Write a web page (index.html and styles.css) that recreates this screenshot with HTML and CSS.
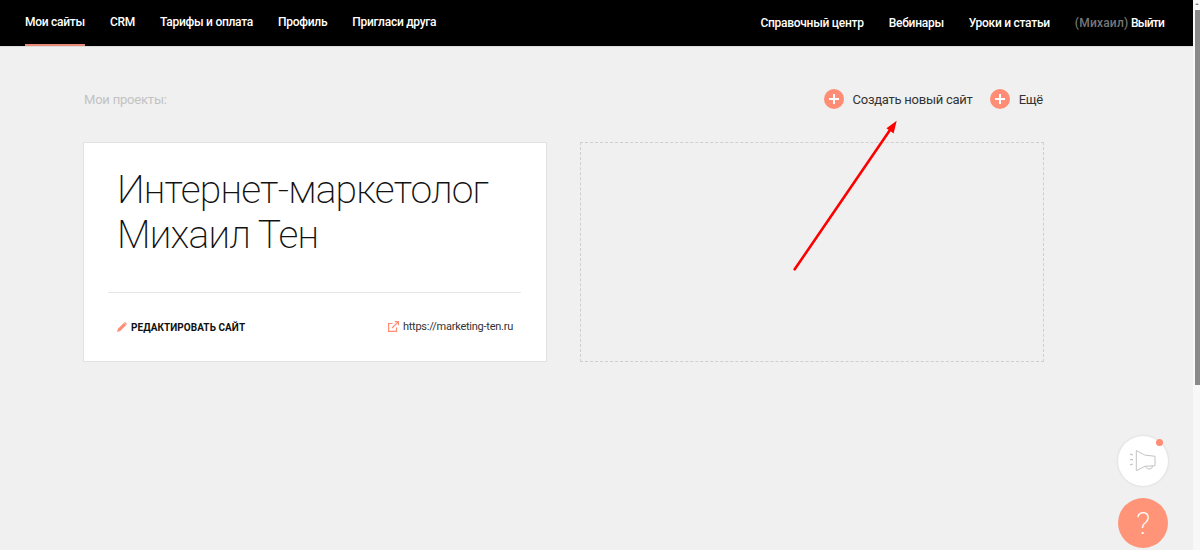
FILE: index.html
```html
<!DOCTYPE html>
<html lang="ru">
<head>
  <meta charset="UTF-8">
  <title>Мои сайты</title>
  <link rel="stylesheet" href="styles.css">
</head>
<body>
  <div class="scrollbar"><div class="scrollbar-arrow"></div><div class="scrollbar-thumb"></div></div>

  <header class="topbar">
    <nav class="nav">
      <a class="nav-item active">Мои сайты</a>
      <a class="nav-item">CRM</a>
      <a class="nav-item">Тарифы и оплата</a>
      <a class="nav-item">Профиль</a>
      <a class="nav-item">Пригласи друга</a>
    </nav>
    <nav class="nav nav-right">
      <a class="nav-item">Справочный центр</a>
      <a class="nav-item">Вебинары</a>
      <a class="nav-item">Уроки и статьи</a>
      <div class="nav-item"><span class="user-name">(Михаил)</span> <a class="logout">Выйти</a></div>
    </nav>
  </header>

  <main class="content">
    <div class="toolbar">
      <div class="toolbar-title">Мои проекты:</div>
      <div class="actions">
        <a class="action"><span class="plus"></span>Создать новый сайт</a>
        <a class="action"><span class="plus"></span>Ещё</a>
      </div>
    </div>

    <div class="projects">
      <div class="card">
        <h1 class="card-title">Интернет-маркетолог<br>Михаил Тен</h1>
        <div class="card-footer">
          <a class="edit-link">
            <svg class="pencil" width="10" height="10" viewBox="0 0 10 10"><path d="M0 10 L1 6.8 L6.8 1 L9 3.2 L3.2 9 Z M7.4 .4 Q8 -.2 8.6 .4 L9.6 1.4 Q10.2 2 9.6 2.6 L9.3 2.9 L7.1 .7 Z" fill="#ff8c75"/></svg>
            Редактировать сайт
          </a>
          <a class="site-link">
            <svg class="external" width="11" height="11" viewBox="0 0 11 11" fill="none" stroke="#ff8c75" stroke-width="1.2"><path d="M8.5 6.5 V10.4 H.6 V2.5 H4.5"/><path d="M4 7 L10.2 .8 M6.8 .6 H10.4 V4.2"/></svg>
            https://marketing-ten.ru
          </a>
        </div>
      </div>
      <div class="placeholder"></div>
    </div>
  </main>

  <svg class="arrow" width="110" height="155" viewBox="0 0 110 155">
    <path d="M1.7 151.3 L97 12" stroke="#fe0000" stroke-width="2.6" stroke-linecap="round" fill="none"/>
    <path d="M103.7 2.7 L100.6 15.5 L93.5 10.2 Z" fill="#fe0000"/>
  </svg>

  <div class="float-btn notice">
    <svg width="26" height="22" viewBox="0 0 26 22" fill="none" stroke="#c4c4c4" stroke-width="1">
      <path d="M6.3 .5 V20.7 L15 16.3 L25 15.7 V6.3 L14.7 5 Z"/>
      <path d="M15 16.3 Q17 19.5 20 19 Q22.5 18.5 22.5 16"/>
      <path d="M0 4 L3 5 M0 9.7 H3 M0 15 L3 14" stroke-width="1.2"/>
    </svg>
    <span class="dot"></span>
  </div>
  <div class="float-btn help">?</div>
</body>
</html>
```

FILE: styles.css
```css
html, body { margin: 0; height: 550px; overflow: hidden; }
body { background: #f0f0f0; font-family: Roboto, "Noto Sans", sans-serif; color: #1a1a1a; }

.topbar { display: flex; justify-content: space-between; align-items: stretch; height: 46px; margin-right: 7px; padding: 0 29px 0 25px; background: #000; border-bottom: 1px solid #ddd; }
.nav { display: flex; gap: 25px; }
.nav-item { display: block; box-sizing: border-box; height: 46px; padding-top: 14px; color: #fff; font-size: 12px; font-weight: 500; letter-spacing: -.27px; line-height: 17px; border-bottom: 2px solid transparent; }
.nav-item.active { border-bottom-color: #e98a78; }
.nav-right .nav-item { padding-top: 15px; }
.user-name { color: #777; letter-spacing: .2px; }
.logout { letter-spacing: -.8px; }

.content { width: 961px; margin-left: 83px; }
.toolbar { display: flex; justify-content: space-between; align-items: center; height: 22px; margin-top: 41px; padding: 0 1px; }
.toolbar-title { color: #c2c2c2; font-size: 13px; letter-spacing: -.2px; }
.actions { display: flex; gap: 17px; }
.action { display: flex; align-items: center; gap: 9px; color: #333; font-size: 13px; letter-spacing: -.25px; }
.plus { position: relative; width: 20px; height: 20px; border-radius: 50%; background: #ff8c75; }
.plus::before, .plus::after { content: ""; position: absolute; background: #fff; }
.plus::before { left: 5px; top: 9px; width: 10px; height: 2px; }
.plus::after { left: 9px; top: 5px; width: 2px; height: 10px; }

.projects { display: grid; grid-template-columns: 464px 464px; gap: 33px; margin-top: 32px; }
.card { box-sizing: border-box; height: 220px; background: #fff; border: 1px solid #e2e2e2; display: flex; flex-direction: column; }
.card-title { height: 149px; box-sizing: border-box; margin: 0; padding: 25px 0 0 33px; font-size: 39px; line-height: 45px; font-weight: 200; letter-spacing: -.8px; white-space: nowrap; color: #111; }
.card-footer { display: flex; justify-content: space-between; align-items: center; margin: 0 25px 0 24px; padding: 27px 8px 0 9px; border-top: 1px solid #e6e6e6; }
.edit-link { display: flex; align-items: center; gap: 4px; margin-top: 1px; color: #111; font-size: 10px; font-weight: 700; letter-spacing: .05px; text-transform: uppercase; }
.site-link { display: flex; align-items: center; gap: 4px; color: #333; font-size: 11px; letter-spacing: -.25px; }
.placeholder { border: 1px dashed #cfcfcf; }

.arrow { position: absolute; left: 793px; top: 118px; }

.float-btn { position: absolute; left: 1118px; width: 50px; height: 50px; border-radius: 50%; display: flex; align-items: center; justify-content: center; }
.notice { top: 436px; background: #fff; box-shadow: 0 0 3px rgba(0,0,0,.12); }
.dot { position: absolute; right: 5px; top: 3px; width: 7px; height: 7px; border-radius: 50%; background: #ff8c75; }
.help { top: 498px; background: #ff9478; color: #fff; font-size: 32px; font-weight: 200; }

.scrollbar { position: absolute; right: 0; top: 0; width: 7px; height: 550px; background: #f8f8f8; }
.scrollbar-arrow { margin: 3px 0 0 2px; width: 0; height: 0; border: 2.5px solid transparent; border-top: 0; border-bottom-color: #8a8a8a; }
.scrollbar-thumb { margin: 5px 0 0 2px; height: 375px; background: #8a8a8a; }
```
